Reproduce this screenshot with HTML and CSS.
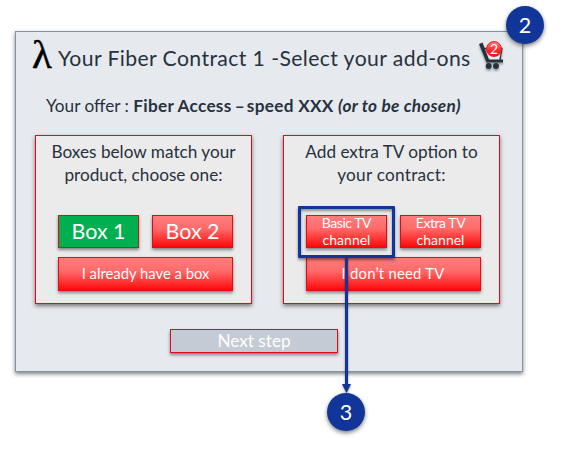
FILE: index.html
```html
<!DOCTYPE html>
<html lang="en">
<head>
<meta charset="utf-8">
<title>Select your add-ons</title>
<link rel="stylesheet" href="styles.css">
</head>
<body>
<main class="panel">
  <header class="header">
    <span class="logo">λ</span>
    <h1 class="title">Your Fiber Contract 1 -Select your add-ons</h1>
    <div class="cart">
      <svg width="28" height="30" viewBox="0 0 28 30">
        <path d="M1 4 4.500 2.500 11 19.500H25V22.500H8.500Z" fill="#27323c"/>
        <path d="M6 8.500H24L22 20" fill="none" stroke="#27323c" stroke-width="1.300"/>
        <circle cx="10.700" cy="26" r="3" fill="#27323c"/>
        <circle cx="18" cy="26" r="3" fill="#27323c"/>
      </svg>
      <span class="count">2</span>
    </div>
  </header>
  <p class="offer">Your offer : <b>Fiber Access<span class="dash"> – </span>speed XXX <i>(or to be chosen)</i></b></p>
  <div class="groups">
    <section class="group">
      <h2>Boxes below match your<br>product, choose one:</h2>
      <div class="choices">
        <button class="large selected">Box 1</button>
        <button class="large">Box 2</button>
        <button class="wide">I already have a box</button>
      </div>
    </section>
    <section class="group">
      <h2>Add extra TV option to<br><span class="loose">your contract:</span></h2>
      <div class="choices">
        <button class="small"><span class="label"><span class="tight">Basic TV</span><br>channel</span></button>
        <button class="small"><span class="label"><span class="tight">Extra TV</span><br>channel</span></button>
        <button class="wide decline">I don’t need TV</button>
      </div>
    </section>
  </div>
  <button class="next">Next step</button>
</main>
<div class="highlight"></div>
<svg class="arrow" width="12" height="136" viewBox="0 0 12 136"><path d="M5 0H8V127H11L6.500 136 2 127H5Z" fill="#12359a"/></svg>
<span class="step step-two">2</span>
<span class="step step-three">3</span>
</body>
</html>
```

FILE: styles.css
```css
* { box-sizing: border-box; }
body {
  margin: 0;
  padding: 31px 0 0 15px;
  position: relative;
  height: 454px;
  overflow: hidden;
  background: #fff;
  color: #27323e;
  font-family: Lato, sans-serif;
}
h1, h2, p { margin: 0; font-weight: 400; }
button {
  margin: 0;
  padding: 0;
  font: inherit;
  border: 1px solid #e30b17;
  border-radius: 0;
  color: #fff;
  box-shadow: 0 2px 3px rgba(0, 0, 0, .45);
}
.panel {
  width: 508px;
  height: 341px;
  border: 1px solid #8093a9;
  background: #e6e9ee;
  box-shadow: 0 2px 4px rgba(0, 0, 0, .5);
}
.header { display: flex; height: 54px; padding-left: 16px; }
.logo {
  width: 26px;
  font: 41px/45px "Liberation Serif", serif;
  color: #000;
  -webkit-text-stroke: .5px #000;
}
.title { width: 420px; font-size: 21.200px; line-height: 53px; letter-spacing: .4px; white-space: nowrap; }
.cart { position: relative; padding-top: 8px; }
.cart svg { display: block; filter: drop-shadow(0 2px 1px rgba(0, 0, 0, .35)); }
.count {
  position: absolute;
  left: 8px;
  top: 9px;
  width: 16px;
  height: 16px;
  border-radius: 50%;
  background: linear-gradient(#ff7c7c, #ff2525 60%, #ff1018);
  border: 1px solid #e32029;
  color: #fff;
  font-size: 14px;
  line-height: 14px;
  text-align: center;
}
.offer { height: 49px; padding: 8px 0 0 30px; font-size: 17.200px; line-height: 24px; white-space: nowrap; }
.offer b { letter-spacing: .28px; }
.dash { letter-spacing: -1px; }
.groups { display: flex; gap: 31px; padding-left: 19px; }
.group {
  width: 217px;
  height: 169px;
  padding: 4px 0 0 22px;
  border: 1px solid #e30b17;
  background: #ebebeb;
  box-shadow: 0 2px 4px rgba(0, 0, 0, .5);
}
.group h2 { height: 75px; margin-left: -22px; font-size: 17.200px; line-height: 23px; text-align: center; }
.loose { letter-spacing: .25px; }
.tight { letter-spacing: -.45px; }
.choices { display: grid; grid-template-columns: 81px 81px; grid-template-rows: 33px 34px; gap: 9px 13px; }
.choices button {
  background: linear-gradient(#ff7d7d, #ff6b6b 40%, #ff0909);
  font-size: 14px;
  line-height: 17px;
  padding-bottom: 1px;
}
.choices .small { padding: 0; }
.label { display: block; margin: -2px 0 -1px; }
.choices .large { font-size: 21.400px; line-height: 31px; }
.choices .selected { background: #00b050; }
.choices .wide { grid-column: span 2; font-size: 14.800px; }
.choices .decline { letter-spacing: .25px; padding-right: 1px; }
.next {
  display: block;
  width: 168px;
  height: 24px;
  margin: 25px 0 0 154px;
  background: #c4cbd4;
  font-size: 17.200px;
  line-height: 21px;
  padding-bottom: 1px;
}
.highlight {
  position: absolute;
  left: 298px;
  top: 206px;
  width: 97px;
  height: 52px;
  border: 3px solid #12359a;
  border-radius: 1px;
  box-shadow: 0 2px 3px rgba(0, 0, 0, .45), inset 0 2px 3px rgba(0, 0, 0, .4);
}
.arrow { position: absolute; left: 340px; top: 257px; filter: drop-shadow(0 1px 1px rgba(0, 0, 0, .4)); }
.step {
  position: absolute;
  width: 38px;
  height: 38px;
  border-radius: 50%;
  background: #12359a;
  color: #fff;
  font-size: 21.500px;
  line-height: 38px;
  text-align: center;
  box-shadow: 0 2px 4px rgba(0, 0, 0, .5);
}
.step-two { left: 506px; top: 6px; }
.step-three { left: 327px; top: 393px; }
```
